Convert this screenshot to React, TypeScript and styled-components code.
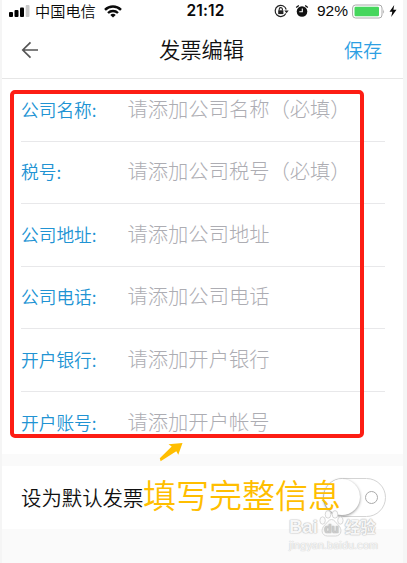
import React from 'react';
import styled, { createGlobalStyle } from 'styled-components';

const GlobalStyle = createGlobalStyle`
  * {
    box-sizing: border-box;
  }

  body {
    margin: 0;
    background: #f5f5f5;
    font-family: 'Noto Sans CJK SC', sans-serif;
  }
`;

const Screen = styled.div`
  position: relative;
  width: 401px;
  height: 563px;
  margin-left: 2px;
  background: #fafafa;
  overflow: hidden;
  white-space: nowrap;
`;

const StatusBar = styled.div`
  display: grid;
  grid-template-columns: 1fr auto 1fr;
  align-items: center;
  height: 22px;
  padding: 0 6px 0 7px;
  background: #fff;
  color: #0a0a0a;
`;

const StatusGroup = styled.div<{ $end?: boolean }>`
  display: flex;
  align-items: center;
  justify-content: ${(p) => (p.$end ? 'flex-end' : 'flex-start')};

  svg {
    display: block;
    flex-shrink: 0;
  }
`;

const Carrier = styled.span`
  margin: -2px 8px 0 5px;
  font-size: 15.2px;
  font-weight: 350;
  line-height: 22px;
`;

const Clock = styled.span`
  padding-left: 5px;
  font: 600 15.5px/22px Inter, sans-serif;
  letter-spacing: 0.1px;
`;

const Percent = styled.span`
  margin: 0 4px 0 8px;
  font: 400 15.5px/22px 'Liberation Sans', sans-serif;
`;

const NavBar = styled.header`
  display: grid;
  grid-template-columns: 1fr auto 1fr;
  align-items: center;
  height: 57px;
  padding: 0 21px 0 19px;
  background: #fff;
  border-bottom: 1px solid #e6e6e6;
`;

const Title = styled.h1`
  margin: 0;
  padding-bottom: 2px;
  font-size: 21.3px;
  font-weight: 350;
  line-height: 54px;
  color: #111;
`;

const Save = styled.span`
  justify-self: end;
  font-size: 19px;
  font-weight: 350;
  line-height: 54px;
  color: #2d9fe3;
`;

const Form = styled.section`
  height: 374.5px;
  padding-left: 19px;
  padding-right: 18px;
  background: #fff;
`;

const Field = styled.div`
  display: flex;
  align-items: center;
  height: 62.5px;
  padding-bottom: 2px;
  border-bottom: 1px solid #e8e8ea;

  &:last-child {
    border-bottom: 0;
  }
`;

const Label = styled.label`
  width: 106.5px;
  font-size: 17.7px;
  font-weight: 350;
  line-height: 26px;
  color: #2193d3;
`;

const Placeholder = styled.span`
  padding-bottom: 2px;
  font-size: 20.3px;
  font-weight: 300;
  line-height: 30px;
  color: #adadb3;
`;

const DefaultRow = styled.section`
  display: flex;
  align-items: center;
  justify-content: space-between;
  height: 63px;
  margin-top: 12px;
  padding: 0 17px 0 19px;
  background: #fff;
`;

const DefaultLabel = styled.span`
  font-size: 20.4px;
  font-weight: 350;
  line-height: 30px;
  color: #111;
`;

const Toggle = styled.div`
  display: flex;
  align-items: center;
  justify-content: space-between;
  width: 63px;
  height: 39px;
  padding-right: 7px;
  border: 1.5px solid #d4d4d4;
  border-radius: 20px;
`;

const Knob = styled.span`
  width: 36px;
  height: 36px;
  border-radius: 50%;
  background: #fff;
  box-shadow: 0 1px 3px rgba(0, 0, 0, 0.45);
`;

const OffMark = styled.span`
  width: 13px;
  height: 13px;
  border: 1.6px solid #aaa;
  border-radius: 50%;
`;

const Highlight = styled.div`
  position: absolute;
  left: 8px;
  top: 90px;
  width: 354px;
  height: 348px;
  border: 4px solid #fd1d14;
  border-radius: 5px;
`;

const Arrow = styled.svg`
  position: absolute;
  left: 156px;
  top: 442px;
`;

const Note = styled.div`
  position: absolute;
  left: 141px;
  top: 470px;
  font-size: 33px;
  font-weight: 350;
  line-height: 48px;
  color: #ffbe00;
`;

const Watermark = styled.div`
  position: absolute;
  left: 287px;
  top: 510px;
  color: #f7f7f7;
`;

const WatermarkBrand = styled.div`
  display: flex;
  align-items: flex-end;
  height: 29px;
  font: 700 18.5px/24px 'Liberation Sans', 'Noto Sans CJK SC', sans-serif;
  text-shadow: 0 0 1px #bbb, 0 0 1px #bbb, 0 0 2px #ccc;

  svg {
    margin: 0 0 2px 1px;
  }
`;

const WatermarkName = styled.span`
  margin-left: 1px;
  font: 700 15.5px/26px 'Noto Sans CJK SC', sans-serif;
`;

const WatermarkUrl = styled.div`
  margin-top: -1px;
  font: 400 10.3px/14px Inter, sans-serif;
  text-shadow: 0 0 1px #ccc, 0 0 1px #ccc;
`;

const fields = [
  { label: '公司名称:', placeholder: '请添加公司名称（必填）' },
  { label: '税号:', placeholder: '请添加公司税号（必填）' },
  { label: '公司地址:', placeholder: '请添加公司地址' },
  { label: '公司电话:', placeholder: '请添加公司电话' },
  { label: '开户银行:', placeholder: '请添加开户银行' },
  { label: '开户账号:', placeholder: '请添加开户帐号' },
];

const SignalIcon = () => (
  <svg width="21" height="12" viewBox="0 0 21 12">
    <rect x="0" y="7" width="4" height="5" rx="1" />
    <rect x="5.5" y="5" width="4" height="7" rx="1" />
    <rect x="11" y="2.5" width="4" height="9.5" rx="1" />
    <rect x="16.7" y="0" width="3.8" height="12" rx="1" fill="#c9c9c9" />
  </svg>
);

const WifiIcon = () => (
  <svg width="18" height="13" viewBox="0 0 18 13" fill="none" stroke="#0a0a0a">
    <path d="M1 4.8C5.5.5 12.5.5 17 4.8" strokeWidth="2.5" />
    <path d="M4 8C6.8 5.3 11.2 5.3 14 8" strokeWidth="2.3" />
    <path d="M6.3 9.9C7.8 8.5 10.2 8.5 11.7 9.9L9 12.6Z" fill="#0a0a0a" stroke="none" />
  </svg>
);

const RotationLockIcon = () => (
  <svg width="15" height="14" viewBox="0 0 15 14" fill="none" stroke="#222">
    <path d="M11.8 9.4A5.6 5.6 0 1 1 12.2 5.5" strokeWidth="1.2" />
    <path d="M10.3 6.5h4.4l-2.2 2.7Z" fill="#222" stroke="none" />
    <rect x="4.2" y="6.3" width="5.2" height="3.8" fill="#222" stroke="none" />
    <path d="M5.2 6.5V5.2a1.6 1.6 0 0 1 3.2 0v1.3" strokeWidth="1.1" />
  </svg>
);

const AlarmIcon = () => (
  <svg width="14" height="14" viewBox="0 0 14 14" fill="none">
    <circle cx="7" cy="7.5" r="5.3" fill="#111" />
    <path d="M1.2 3.6 3.8 1.4M12.8 3.6 10.2 1.4" stroke="#111" strokeWidth="1.3" />
    <path d="M4.3 7.8h3V4.6" stroke="#fff" strokeWidth="1.1" />
  </svg>
);

const BatteryIcon = () => (
  <svg width="34" height="15" viewBox="0 0 34 15">
    <rect x=".6" y="1" width="29.4" height="13" rx="3" fill="#fff" stroke="#aaa" strokeWidth="1" />
    <rect x="2.5" y="2.8" width="24.5" height="9.4" rx="1.2" fill="#45d65c" />
    <path d="M31.2 5.2q1.7 2.3 0 4.6Z" fill="#aaa" />
  </svg>
);

const BoltIcon = () => (
  <svg width="8" height="12" viewBox="0 0 8 12">
    <path d="M5.2 0 .5 6.8h2.8L2.2 12 7.5 4.8H4.4Z" fill="#0a0a0a" />
  </svg>
);

const BackIcon = () => (
  <svg width="18" height="18" viewBox="0 0 18 18" fill="none" stroke="#555" strokeWidth="1.7">
    <path d="M17 9H2M9.5 1.3 1.8 9l7.7 7.7" />
  </svg>
);

const PawIcon = () => (
  <svg width="25" height="27" viewBox="0 0 25 27" fill="#fbfbfb" stroke="#d3d3d3" strokeWidth=".9">
    <ellipse cx="3.6" cy="10.5" rx="2.7" ry="3.7" />
    <ellipse cx="9" cy="4.4" rx="2.8" ry="3.8" />
    <ellipse cx="16" cy="4.4" rx="2.8" ry="3.8" />
    <ellipse cx="21.4" cy="10.5" rx="2.7" ry="3.7" />
    <path d="M12.5 9.5c3 0 4 3 6.5 5.2 5 4.5 3.3 11.3-2.5 11.3h-8C2.7 26 1 19.2 6 14.7c2.5-2.2 3.5-5.2 6.5-5.2Z" />
    <text x="12.5" y="23" textAnchor="middle" fontSize="12" fontWeight="700" fontFamily="Liberation Sans, sans-serif" fill="#ccc" stroke="none">
      du
    </text>
  </svg>
);

const App = () => {
  return (
    <>
      <GlobalStyle />
      <Screen>
        <StatusBar>
          <StatusGroup>
            <SignalIcon />
            <Carrier>中国电信</Carrier>
            <WifiIcon />
          </StatusGroup>
          <Clock>21:12</Clock>
          <StatusGroup $end>
            <RotationLockIcon />
            <span style={{ width: 6 }} />
            <AlarmIcon />
            <Percent>92%</Percent>
            <BatteryIcon />
            <span style={{ width: 3 }} />
            <BoltIcon />
          </StatusGroup>
        </StatusBar>
        <NavBar>
          <BackIcon />
          <Title>发票编辑</Title>
          <Save>保存</Save>
        </NavBar>
        <Form>
          {fields.map((item) => (
            <Field key={item.label}>
              <Label>{item.label}</Label>
              <Placeholder>{item.placeholder}</Placeholder>
            </Field>
          ))}
        </Form>
        <DefaultRow>
          <DefaultLabel>设为默认发票</DefaultLabel>
          <Toggle>
            <Knob />
            <OffMark />
          </Toggle>
        </DefaultRow>
        <Highlight />
        <Arrow width="26" height="20" viewBox="0 0 26 20">
          <path d="M24.500 1 10.500 2.300l3.200 2.300L1.800 16.300l.8 2.900L18.300 9.200l2 3.600Z" fill="#ffbe00" />
        </Arrow>
        <Watermark>
          <WatermarkBrand>
            Bai
            <PawIcon />
            <WatermarkName>经验</WatermarkName>
          </WatermarkBrand>
          <WatermarkUrl>jingyan.baidu.com</WatermarkUrl>
        </Watermark>
        <Note>填写完整信息</Note>
      </Screen>
    </>
  );
};

export default App;
